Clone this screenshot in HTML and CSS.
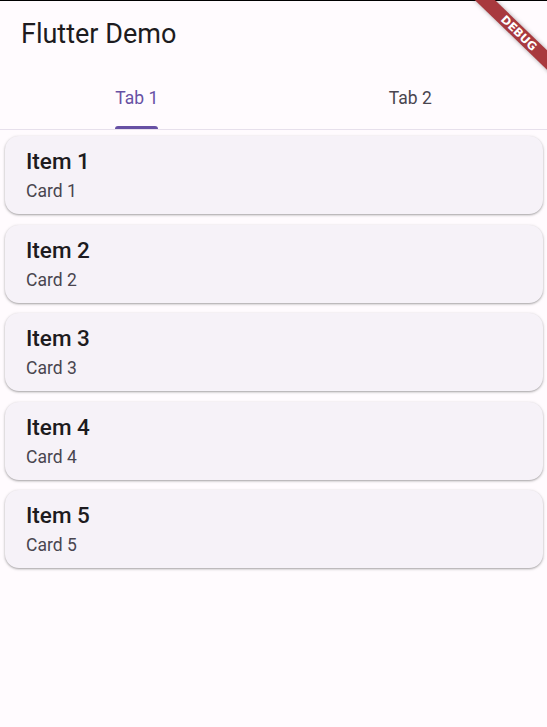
FILE: index.html
```html
<!DOCTYPE html>
<html>
<head>
<meta charset="utf-8">
<link rel="stylesheet" href="styles.css">
</head>
<body>
<div class="app">
  <header class="appbar">
    <h1 class="title">Flutter Demo</h1>
  </header>
  <nav class="tabs">
    <div class="tab active"><span class="tab-label">Tab 1</span></div>
    <div class="tab"><span class="tab-label">Tab 2</span></div>
  </nav>
  <main class="list">
    <div class="card"><div class="card-title">Item 1</div><div class="card-sub">Card 1</div></div>
    <div class="card"><div class="card-title">Item 2</div><div class="card-sub">Card 2</div></div>
    <div class="card"><div class="card-title">Item 3</div><div class="card-sub">Card 3</div></div>
    <div class="card"><div class="card-title">Item 4</div><div class="card-sub">Card 4</div></div>
    <div class="card"><div class="card-title">Item 5</div><div class="card-sub">Card 5</div></div>
  </main>
  <div class="banner-clip"><div class="banner">DEBUG</div></div>
</div>
</body>
</html>
```
FILE: styles.css
```css
html, body {
  margin: 0;
  padding: 0;
  height: 100%;
}
body {
  background: #fffbfe;
  font-family: Roboto, "Liberation Sans", sans-serif;
  overflow: hidden;
}
.app {
  position: relative;
  min-height: 100%;
  border-top: 1px solid #000;
  box-sizing: border-box;
}
.appbar {
  height: 73px;
  box-sizing: border-box;
  padding: 18px 21px 0;
}
.title {
  margin: 0;
  font-size: 27px;
  line-height: 30px;
  font-weight: 400;
  color: #1d1b20;
}
.tabs {
  display: flex;
  height: 56px;
  border-bottom: 1px solid #e7e0ec;
  box-sizing: border-box;
}
.tab {
  flex: 1;
  display: flex;
  justify-content: center;
  padding-top: 14px;
  box-sizing: border-box;
}
.tab-label {
  position: relative;
  font-size: 17.5px;
  line-height: 20px;
  height: 41px;
  color: #49454f;
}
.tab.active .tab-label {
  color: #6750a4;
}
.tab.active .tab-label::after {
  content: "";
  position: absolute;
  left: 0;
  right: 0;
  bottom: 0;
  height: 3px;
  background: #6750a4;
  border-radius: 3px 3px 0 0;
}
.list {
  display: flex;
  flex-direction: column;
  gap: 10.5px;
  padding: 6px 4px 0 5px;
}
.card {
  height: 78px;
  box-sizing: border-box;
  padding: 10px 21px 0;
  background: #f6f2f8;
  border-radius: 14px;
  box-shadow: 0 1px 2px rgba(0, 0, 0, 0.28), 0 1px 3px 1px rgba(0, 0, 0, 0.08);
}
.card-title {
  font-size: 22.5px;
  line-height: 30px;
  font-weight: 500;
  color: #1d1b20;
}
.card-sub {
  margin-top: 2px;
  font-size: 17.5px;
  line-height: 26px;
  color: #49454f;
}
.banner-clip {
  position: absolute;
  top: -1px;
  right: 0;
  width: 80px;
  height: 80px;
  overflow: hidden;
}
.banner {
  position: absolute;
  left: -8px;
  top: 26px;
  width: 120px;
  height: 14px;
  line-height: 14px;
  transform: rotate(44deg);
  background: #a8393e;
  box-shadow: 0 0 4px rgba(0, 0, 0, 0.35);
  color: #fff;
  font-family: "DejaVu Sans", sans-serif;
  font-weight: bold;
  font-size: 11.5px;
  text-align: center;
}
```
